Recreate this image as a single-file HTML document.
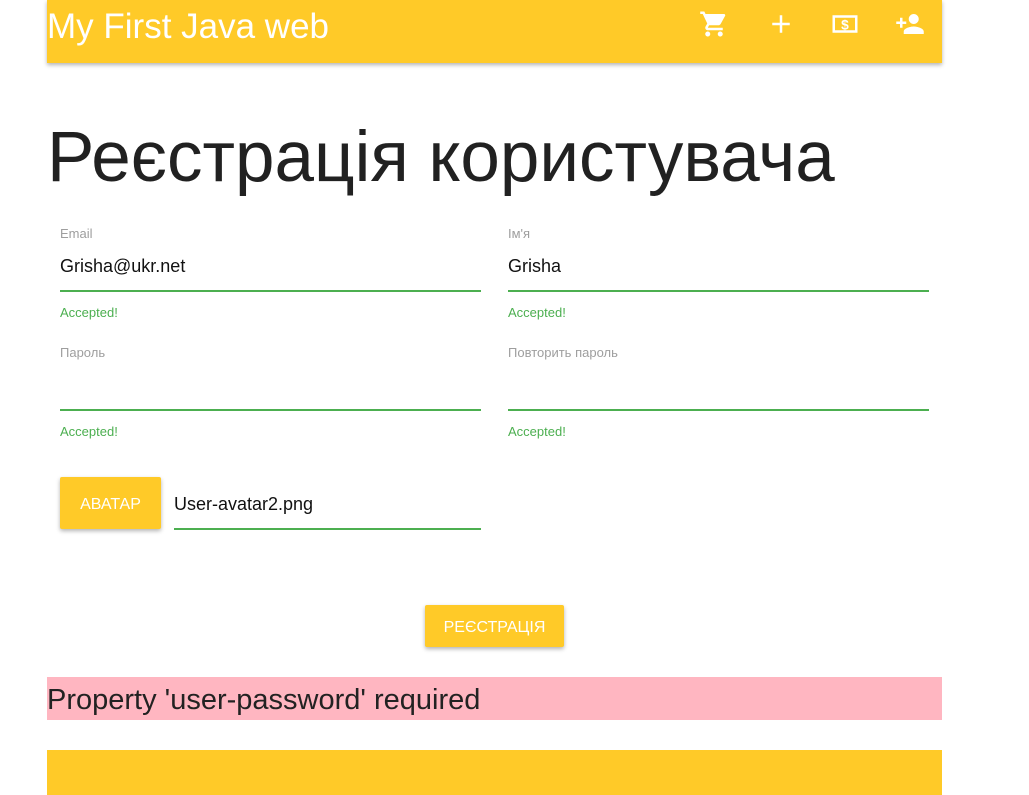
<!DOCTYPE html>
<html><head><meta charset="utf-8"><style>
*{margin:0;padding:0;box-sizing:border-box}
body{width:1029px;height:795px;background:#fff;font-family:"Liberation Sans",sans-serif;position:relative;overflow:hidden}
.a{position:absolute}
.nav{left:47px;top:0;width:895px;height:63px;background:#ffca28;box-shadow:0 2px 4px rgba(0,0,0,.3)}
.lbl{font-size:13px;color:#9e9e9e}
.val{font-size:18px;color:#111}
.line{height:2px;background:#4caf50}
.ok{font-size:13px;color:#4caf50}
.btn{background:#ffca28;color:#fff;font-size:16px;display:flex;align-items:center;justify-content:center;box-shadow:0 2px 4px rgba(0,0,0,.3);border-radius:2px;padding-top:3px}
</style></head><body>
<div class="a nav"></div>
<div class="a" style="left:47px;top:7px;font-size:35px;color:#fff">My First Java web</div>
<svg class="a" style="left:699px;top:9px" width="30" height="30" viewBox="0 0 24 24" fill="#fff"><path d="M7 18c-1.1 0-2 .9-2 2s.9 2 2 2 2-.9 2-2-.9-2-2-2zM1 2v2h2l3.6 7.59-1.35 2.45c-.16.28-.25.61-.25.96 0 1.1.9 2 2 2h12v-2H7.42c-.14 0-.25-.11-.25-.25l.03-.12.9-1.63h7.450c.75 0 1.41-.41 1.75-1.03l3.58-6.49A1 1 0 0 0 20 4H5.21l-.94-2H1zm16 16c-1.1 0-2 .9-2 2s.9 2 2 2 2-.9 2-2-.9-2-2-2z"/></svg>
<svg class="a" style="left:766px;top:9px" width="30" height="30" viewBox="0 0 24 24" fill="#fff"><path d="M19 13h-6v6h-2v-6H5v-2h6V5h2v6h6v2z"/></svg>
<svg class="a" style="left:830px;top:9px" width="30" height="30" viewBox="0 0 24 24" fill="#fff"><path d="M2 5h20v14H2z M4 7v10h16V7z" fill-rule="evenodd"/><text x="12" y="16.5" font-size="11" font-weight="bold" text-anchor="middle" font-family="Liberation Sans" fill="#fff">$</text></svg>
<svg class="a" style="left:894px;top:9px" width="32" height="30" viewBox="0 0 24 24" fill="#fff"><path d="M15 12c2.21 0 4-1.79 4-4s-1.79-4-4-4-4 1.790-4 4 1.79 4 4 4zm-9-2V7H4v3H1v2h3v3h2v-3h3v-2H6zm9 4c-2.67 0-8 1.34-8 4v2h16v-2c0-2.66-5.33-4-8-4z"/></svg>

<div class="a" style="left:47px;top:117px;font-size:71px;color:#212121">Реєстрація користувача</div>

<div class="a lbl" style="left:60px;top:226px">Email</div>
<div class="a val" style="left:60px;top:256px">Grisha@ukr.net</div>
<div class="a line" style="left:60px;top:290px;width:421px"></div>
<div class="a ok" style="left:60px;top:305px">Accepted!</div>

<div class="a lbl" style="left:508px;top:226px">Ім'я</div>
<div class="a val" style="left:508px;top:256px">Grisha</div>
<div class="a line" style="left:508px;top:290px;width:421px"></div>
<div class="a ok" style="left:508px;top:305px">Accepted!</div>

<div class="a lbl" style="left:60px;top:345px">Пароль</div>
<div class="a line" style="left:60px;top:409px;width:421px"></div>
<div class="a ok" style="left:60px;top:424px">Accepted!</div>

<div class="a lbl" style="left:508px;top:345px">Повторить пароль</div>
<div class="a line" style="left:508px;top:409px;width:421px"></div>
<div class="a ok" style="left:508px;top:424px">Accepted!</div>

<div class="a btn" style="left:60px;top:477px;width:101px;height:52px">АВАТАР</div>
<div class="a val" style="left:174px;top:494px">User-avatar2.png</div>
<div class="a line" style="left:174px;top:528px;width:307px"></div>

<div class="a btn" style="left:425px;top:605px;width:139px;height:42px">РЕЄСТРАЦІЯ</div>

<div class="a" style="left:47px;top:677px;width:895px;height:43px;background:#ffb6c1;font-size:29px;color:#222;padding:7px 0 0 0">Property 'user-password' required</div>
<div class="a" style="left:47px;top:750px;width:895px;height:45px;background:#ffca28"></div>
</body></html>
